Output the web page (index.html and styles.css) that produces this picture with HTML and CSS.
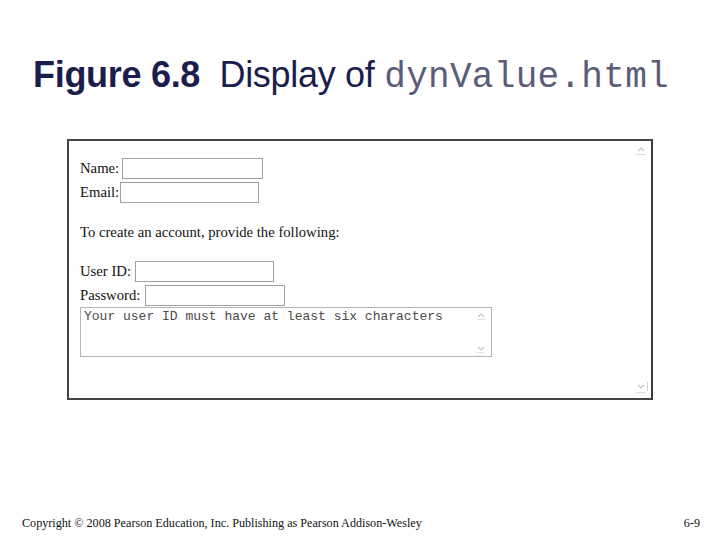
FILE: index.html
```
<!DOCTYPE html>
<html>
<head>
<meta charset="utf-8">
<link rel="stylesheet" href="styles.css">
</head>
<body>
<div class="page">
  <h1 class="title"><span class="fig">Figure 6.8</span>&nbsp; Display of <span class="code">dynValue.html</span></h1>
  <div class="frame">
    <div class="row row-name"><span>Name:</span><input class="field f-name" type="text"></div>
    <div class="row row-email"><span>Email:</span><input class="field f-email" type="text"></div>
    <p class="note">To create an account, provide the following:</p>
    <div class="row row-user"><span>User ID:</span><input class="field f-user" type="text"></div>
    <div class="row row-pass"><span>Password:</span><input class="field f-pass" type="text"></div>
    <div class="ta-wrap">
      <textarea class="ta" readonly>Your user ID must have at least six characters</textarea>
      <svg class="arrow ta-up" width="10" height="8" viewBox="0 0 10 8"><path d="M2 5 L5 2 L8 5" fill="none" stroke="#c4c4c4" stroke-width="1.2"/><path d="M1 7.5 H9" stroke="#e2e2e2"/></svg>
      <svg class="arrow ta-down" width="10" height="8" viewBox="0 0 10 8"><path d="M2 2 L5 5 L8 2" fill="none" stroke="#c4c4c4" stroke-width="1.2"/><path d="M1 7.5 H9" stroke="#e2e2e2"/></svg>
    </div>
    <svg class="arrow fr-up" width="12" height="10" viewBox="0 0 12 10"><path d="M3 6 L6 3 L9 6" fill="none" stroke="#c4c4c4" stroke-width="1.2"/><path d="M1 9.5 H11" stroke="#dcdcdc"/></svg>
    <svg class="arrow fr-down" width="14" height="12" viewBox="0 0 14 12"><path d="M3 4 L6 7 L9 4" fill="none" stroke="#c4c4c4" stroke-width="1.2"/><path d="M12.5 1 V10" stroke="#d0d0d0"/><path d="M1 11.5 H11" stroke="#dcdcdc"/></svg>
  </div>
  <div class="footer">
    <span>Copyright © 2008 Pearson Education, Inc. Publishing as Pearson Addison-Wesley</span>
    <span>6-9</span>
  </div>
</div>
</body>
</html>
```
FILE: styles.css
```
html, body {
  margin: 0;
  padding: 0;
  background: #ffffff;
}
.page {
  width: 720px;
  height: 540px;
  display: flex;
  flex-direction: column;
  box-sizing: border-box;
}
.title {
  margin: 55px 0 0 33px;
  font-family: "Liberation Sans", Arial, sans-serif;
  font-weight: normal;
  font-size: 36px;
  line-height: 40px;
  height: 40px;
  color: #1b1d4d;
  white-space: nowrap;
  letter-spacing: -0.3px;
}
.fig {
  font-weight: bold;
}
.code {
  font-family: "Liberation Mono", "Courier New", monospace;
  letter-spacing: 0.3px;
  color: #5a5c78;
}
.frame {
  position: relative;
  margin: 44px 0 0 67px;
  width: 586px;
  height: 261px;
  box-sizing: border-box;
  border: 2px solid #444444;
  border-right-color: #3a3a3a;
  padding: 16px 0 0 11px;
  display: flex;
  flex-direction: column;
  font-family: "Liberation Serif", "Times New Roman", serif;
  font-size: 14.7px;
  color: #111111;
}
.row {
  display: flex;
  align-items: center;
  gap: 3px;
  height: 22px;
}
.row-email {
  margin-top: 2px;
  gap: 1px;
}
.row-user {
  gap: 4px;
}
.row-pass {
  margin-top: 2px;
  gap: 5px;
}
.field {
  box-sizing: border-box;
  height: 21px;
  margin: 0;
  padding: 0;
  border: 1px solid #a0a0a0;
  background: #ffffff;
  outline: none;
}
.f-name { width: 141px; }
.f-email { width: 139px; }
.f-user { width: 139px; }
.f-pass { width: 140px; }
.note {
  margin: 20px 0 19px 0;
  line-height: 18px;
}
.ta-wrap {
  position: relative;
  margin-top: 1px;
  width: 412px;
  height: 50px;
}
.ta {
  display: block;
  box-sizing: border-box;
  width: 412px;
  height: 50px;
  margin: 0;
  padding: 1px 3px;
  border: 1px solid #b4b4b4;
  resize: none;
  overflow: hidden;
  font-family: "Liberation Mono", "Courier New", monospace;
  font-size: 13px;
  line-height: 15px;
  color: #4a4a4a;
  outline: none;
}
.arrow {
  position: absolute;
  display: block;
}
.ta-up { left: 396px; top: 5px; }
.ta-down { left: 396px; top: 38px; }
.fr-up { left: 566px; top: 4px; }
.fr-down { left: 566px; top: 240px; }
.footer {
  margin-top: auto;
  padding: 0 20px 10px 22px;
  display: flex;
  justify-content: space-between;
  font-family: "Liberation Serif", "Times New Roman", serif;
  font-size: 12.15px;
  line-height: 14px;
  color: #111111;
}
```
